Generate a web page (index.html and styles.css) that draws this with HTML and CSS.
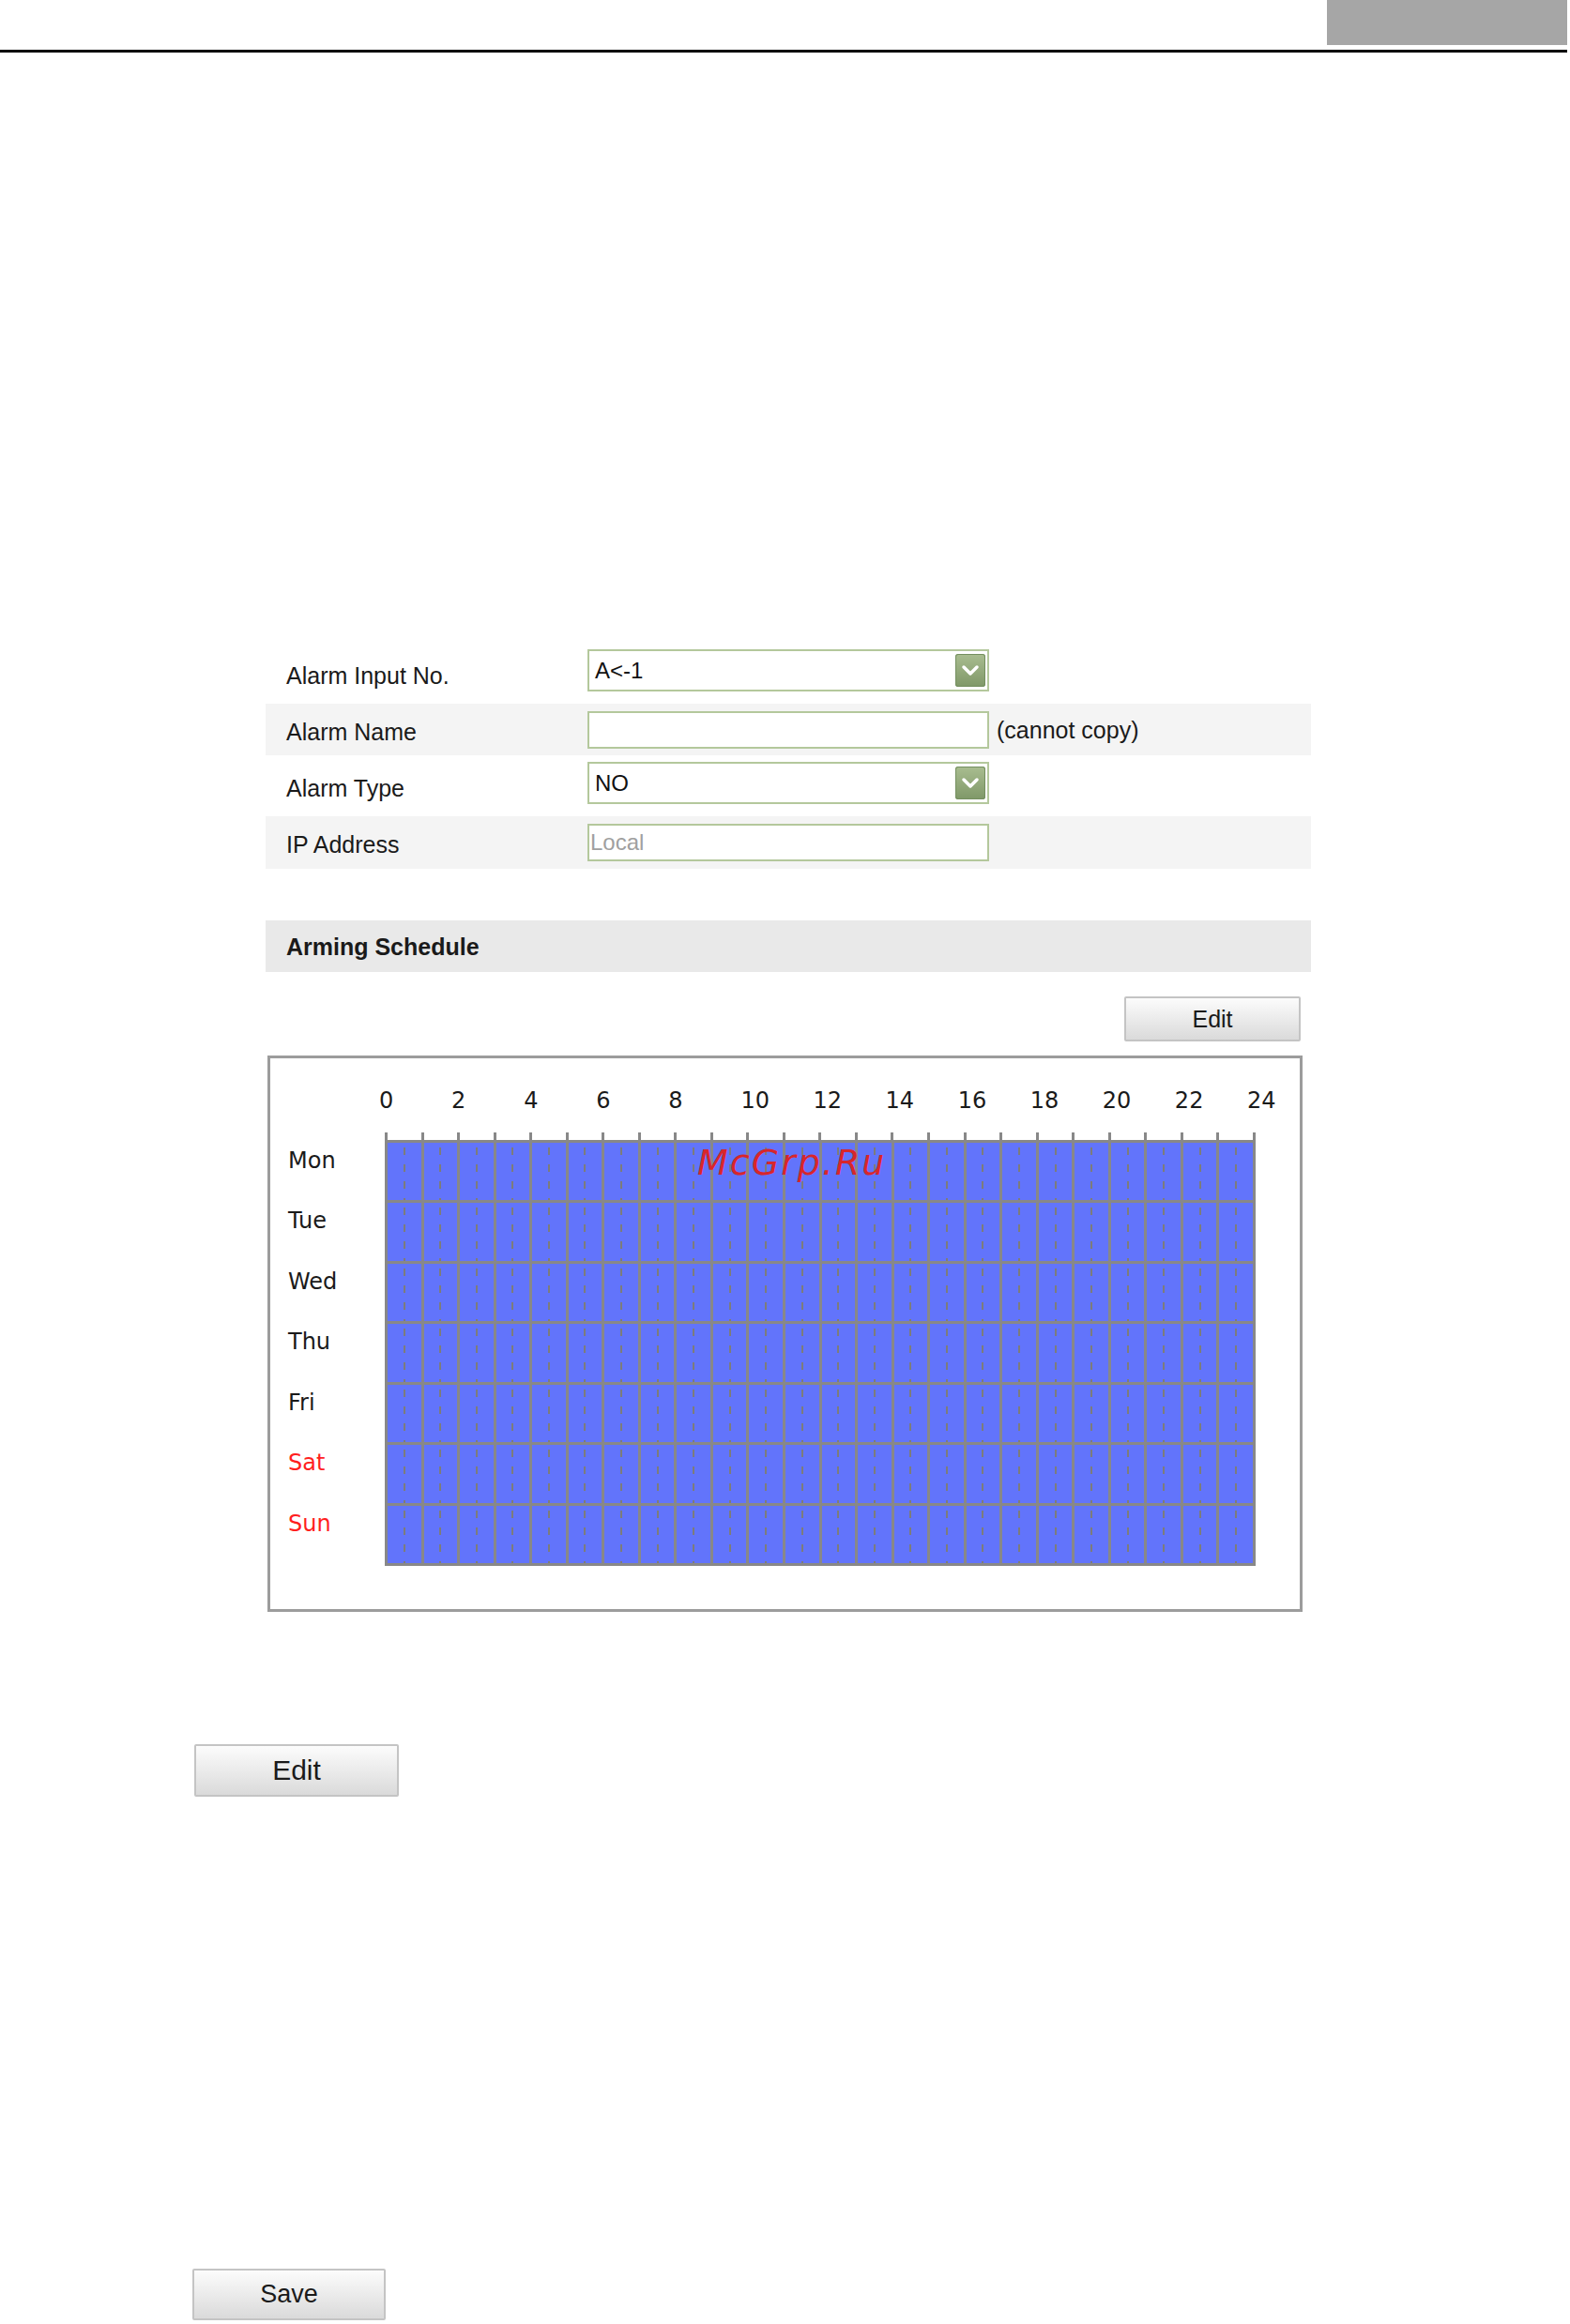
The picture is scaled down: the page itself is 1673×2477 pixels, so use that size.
FILE: index.html
```html
<!DOCTYPE html>
<html lang="en">
<head>
<meta charset="utf-8">
<title>Alarm Input</title>
<link rel="stylesheet" href="styles.css">
</head>
<body>
<header class="topbar"><div class="tab"></div></header>
<main class="page">
  <section class="alarm-form">
    <div class="row row-tall">
      <div class="label">Alarm Input No.</div>
      <div class="select"><span class="value">A&lt;-1</span><span class="arrow"><svg width="32" height="35" viewBox="0 0 32 35"><path d="M9 14 L16 21 L23 14" fill="none" stroke="#fff" stroke-width="3.5" stroke-linecap="round" stroke-linejoin="round"/></svg></span></div>
    </div>
    <div class="row row-short shade">
      <div class="label">Alarm Name</div>
      <div class="input"></div>
      <span class="note">(cannot copy)</span>
    </div>
    <div class="row row-tall">
      <div class="label">Alarm Type</div>
      <div class="select"><span class="value">NO</span><span class="arrow"><svg width="32" height="35" viewBox="0 0 32 35"><path d="M9 14 L16 21 L23 14" fill="none" stroke="#fff" stroke-width="3.5" stroke-linecap="round" stroke-linejoin="round"/></svg></span></div>
    </div>
    <div class="row row-short shade">
      <div class="label">IP Address</div>
      <div class="input"><span class="placeholder">Local</span></div>
    </div>
  </section>

  <section class="schedule">
    <div class="section-title">Arming Schedule</div>
    <div class="toolbar"><button class="btn btn-sm">Edit</button></div>
    <div class="schedule-box">
      <div class="hours">
        <span>0</span><span>2</span><span>4</span><span>6</span><span>8</span><span>10</span><span>12</span><span>14</span><span>16</span><span>18</span><span>20</span><span>22</span><span>24</span>
      </div>
      <div class="sched-body">
        <div class="days">
          <span>Mon</span><span>Tue</span><span>Wed</span><span>Thu</span><span>Fri</span><span class="weekend">Sat</span><span class="weekend">Sun</span>
        </div>
        <div class="grid-wrap">
          <div class="ticks">
            <i></i><i></i><i></i><i></i><i></i><i></i><i></i><i></i><i></i><i></i><i></i><i></i><i></i><i></i><i></i><i></i><i></i><i></i><i></i><i></i><i></i><i></i><i></i><i></i><i></i>
          </div>
          <div class="grid">
            <b></b><b></b><b></b><b></b><b></b><b></b><b></b><b></b><b></b><b></b><b></b><b></b><b></b><b></b><b></b><b></b><b></b><b></b><b></b><b></b><b></b><b></b><b></b><b></b>
            <b></b><b></b><b></b><b></b><b></b><b></b><b></b><b></b><b></b><b></b><b></b><b></b><b></b><b></b><b></b><b></b><b></b><b></b><b></b><b></b><b></b><b></b><b></b><b></b>
            <b></b><b></b><b></b><b></b><b></b><b></b><b></b><b></b><b></b><b></b><b></b><b></b><b></b><b></b><b></b><b></b><b></b><b></b><b></b><b></b><b></b><b></b><b></b><b></b>
            <b></b><b></b><b></b><b></b><b></b><b></b><b></b><b></b><b></b><b></b><b></b><b></b><b></b><b></b><b></b><b></b><b></b><b></b><b></b><b></b><b></b><b></b><b></b><b></b>
            <b></b><b></b><b></b><b></b><b></b><b></b><b></b><b></b><b></b><b></b><b></b><b></b><b></b><b></b><b></b><b></b><b></b><b></b><b></b><b></b><b></b><b></b><b></b><b></b>
            <b></b><b></b><b></b><b></b><b></b><b></b><b></b><b></b><b></b><b></b><b></b><b></b><b></b><b></b><b></b><b></b><b></b><b></b><b></b><b></b><b></b><b></b><b></b><b></b>
            <b></b><b></b><b></b><b></b><b></b><b></b><b></b><b></b><b></b><b></b><b></b><b></b><b></b><b></b><b></b><b></b><b></b><b></b><b></b><b></b><b></b><b></b><b></b><b></b>
          </div>
        </div>
      </div>
      <div class="watermark">McGrp.Ru</div>
    </div>
  </section>

  <div class="action action-edit"><button class="btn btn-lg">Edit</button></div>
  <div class="action action-save"><button class="btn btn-save">Save</button></div>
</main>
</body>
</html>
```

FILE: styles.css
```css
html, body {
  margin: 0;
  padding: 0;
  background: #ffffff;
}

body {
  width: 1673px;
  font-family: "Liberation Sans", Arial, sans-serif;
  color: #1a1a1a;
}

/* top bar */
.topbar {
  width: 1670px;
  height: 53px;
  border-bottom: 3px solid #000;
  display: flex;
  justify-content: flex-end;
}

.tab {
  width: 256px;
  height: 48px;
  background: #a6a6a6;
}

/* form */
.alarm-form {
  margin: 629px 0 0 283px;
  width: 1114px;
}

.row {
  display: flex;
  align-items: center;
}

.row-tall { height: 65px; }
.row-short { height: 55px; }
.row:last-child { height: 56px; }

.shade { background: #f4f4f4; }

.label {
  width: 321px;
  padding: 4px 0 0 22px;
  font-size: 25px;
  line-height: 30px;
}

.select,
.input {
  box-sizing: border-box;
  width: 428px;
  border: 2px solid #b4c89c;
  background: #fff;
}

.select {
  height: 45px;
  margin-bottom: 6px;
  display: flex;
  align-items: center;
  justify-content: space-between;
  padding: 0 2px 0 6px;
}

.value {
  font-size: 24px;
  color: #111;
}

.arrow {
  display: flex;
  width: 32px;
  height: 35px;
  border-radius: 3px;
  background: linear-gradient(#a9bd90, #7f9868);
  box-shadow: inset 0 0 0 1px #748f5f;
}

.input {
  height: 40px;
  display: flex;
  align-items: center;
  padding-left: 1px;
}

.placeholder {
  font-size: 24px;
  color: #a0a0a0;
}

.note {
  margin-left: 8px;
  font-size: 25px;
  padding-top: 2px;
}

/* schedule */
.schedule {
  margin: 55px 0 0 283px;
  width: 1114px;
}

.section-title {
  height: 55px;
  box-sizing: border-box;
  padding: 13px 0 0 22px;
  background: #e9e9e9;
  font-size: 25px;
  font-weight: bold;
  line-height: 30px;
}

.toolbar {
  display: flex;
  justify-content: flex-end;
  padding-right: 11px;
  margin-top: 26px;
}

.btn {
  box-sizing: border-box;
  border: 2px solid #c4c4c4;
  border-radius: 2px;
  background: linear-gradient(#fcfcfc, #dadada);
  font-family: "Liberation Sans", Arial, sans-serif;
  color: #1a1a1a;
  padding: 0;
}

.btn-sm {
  width: 188px;
  height: 48px;
  font-size: 25px;
}

.schedule-box {
  position: relative;
  box-sizing: border-box;
  margin: 15px 0 0 2px;
  width: 1103px;
  height: 593px;
  border: 3px solid #9c9c9c;
  padding-top: 31px;
  font-family: "DejaVu Sans", Verdana, sans-serif;
}

.hours {
  display: flex;
  margin-left: 116px;
  height: 28px;
  font-size: 24px;
  line-height: 28px;
  color: #1a1a1a;
}

.hours span {
  width: 77.08px;
  flex: none;
}

.sched-body {
  display: flex;
  margin-top: 20px;
}

.days {
  width: 103px;
  padding: 11px 0 3px 19px;
  display: grid;
  grid-template-rows: repeat(7, 1fr);
  row-gap: 3px;
  font-size: 24px;
  line-height: 28px;
  color: #1a1a1a;
}

.days span { padding-top: 5px; }
.days .weekend { color: #ff1f1f; }

.grid-wrap {
  width: 928px;
}

.ticks {
  display: flex;
  justify-content: space-between;
  height: 8px;
}

.ticks i {
  width: 3px;
  background: #888;
}

.grid {
  display: grid;
  grid-template-columns: repeat(24, 1fr);
  grid-template-rows: repeat(7, 1fr);
  gap: 3px;
  padding: 3px;
  height: 454px;
  box-sizing: border-box;
  background: #888;
}

.grid b {
  display: flex;
  justify-content: center;
  background: #6274fb;
}

.grid b::before {
  content: "";
  width: 2px;
  background-image: repeating-linear-gradient(to bottom, transparent 0 5px, #7c7c7c 5px 13px, transparent 13px 18px);
}

.watermark {
  position: absolute;
  left: 455px;
  top: 92px;
  font-size: 38px;
  line-height: 38px;
  font-style: italic;
  letter-spacing: 2px;
  color: #d8262b;
}

/* bottom actions */
.action-edit {
  margin: 141px 0 0 207px;
}

.btn-lg {
  width: 218px;
  height: 56px;
  font-size: 30px;
}

.action-save {
  margin: 503px 0 0 205px;
}

.btn-save {
  width: 206px;
  height: 55px;
  font-size: 27px;
}
```
